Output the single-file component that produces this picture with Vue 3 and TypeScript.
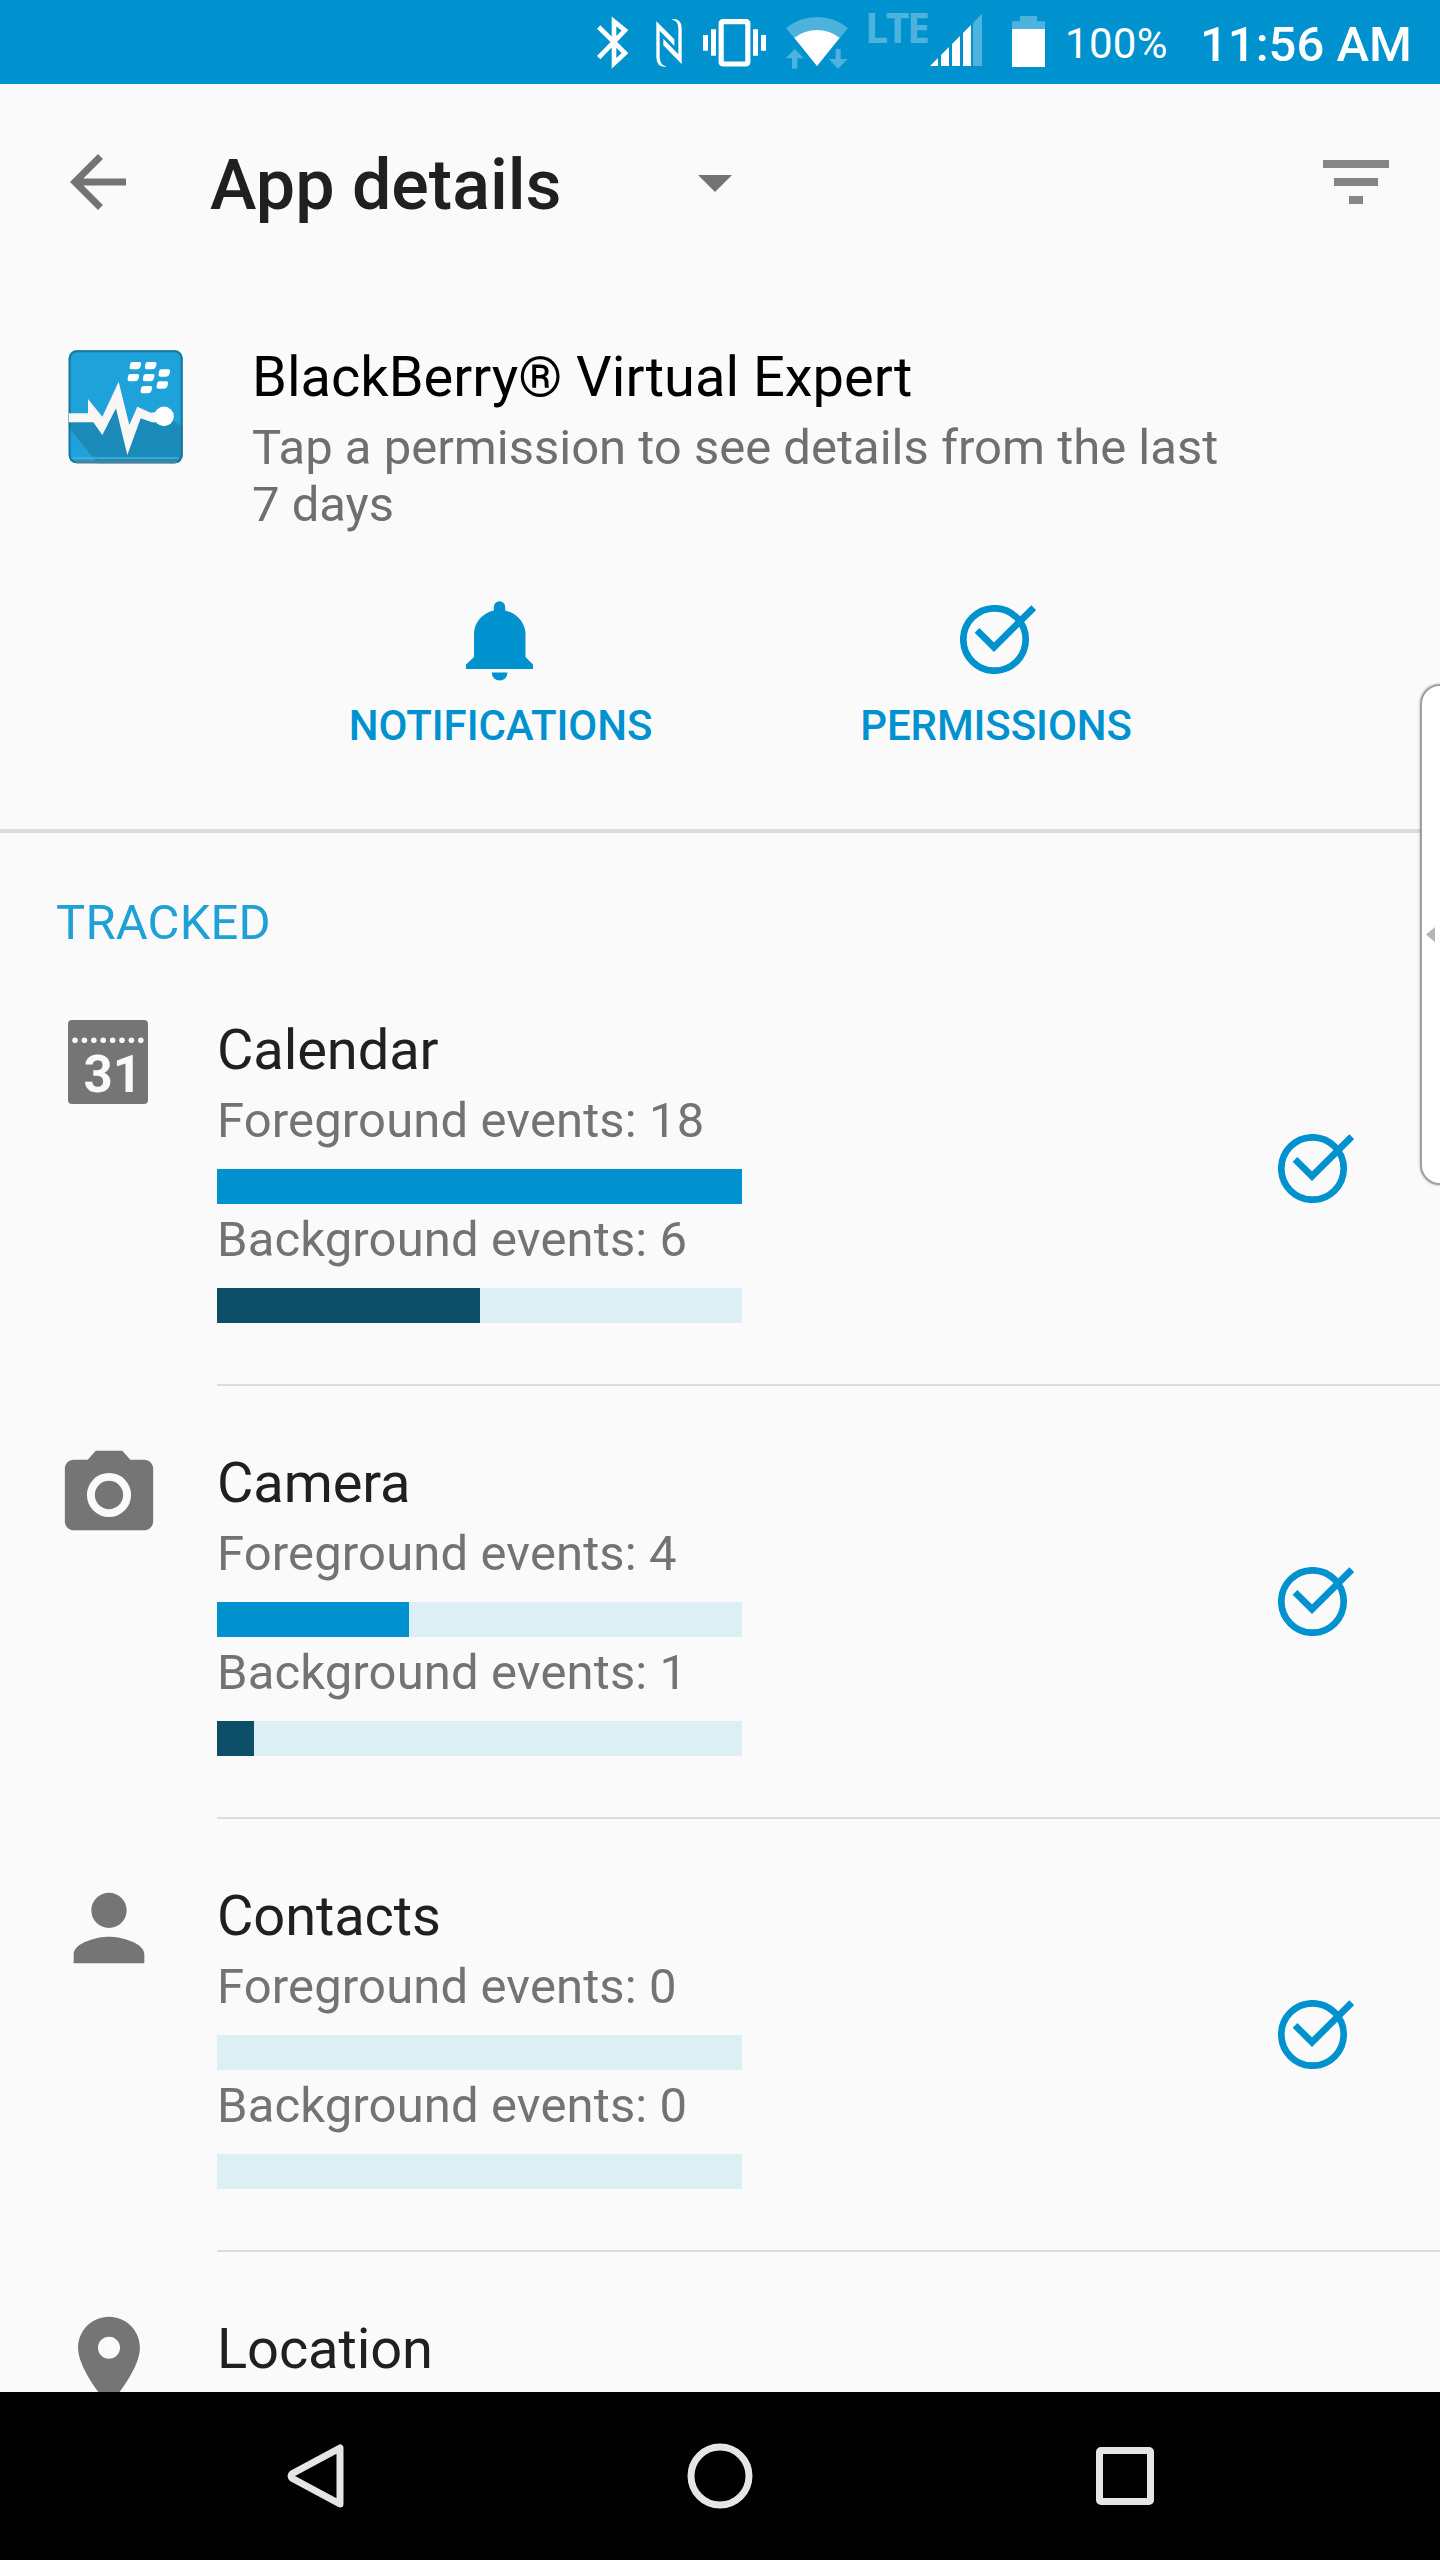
<script setup lang="ts">
interface Permission {
  name: string
  icon: 'calendar' | 'camera' | 'contacts' | 'location'
  foreground: number
  background: number
  foregroundShare: number
  backgroundShare: number
}

const permissions: Permission[] = [
  { name: 'Calendar', icon: 'calendar', foreground: 18, background: 6, foregroundShare: 100, backgroundShare: 50.1 },
  { name: 'Camera', icon: 'camera', foreground: 4, background: 1, foregroundShare: 36.6, backgroundShare: 7.05 },
  { name: 'Contacts', icon: 'contacts', foreground: 0, background: 0, foregroundShare: 0, backgroundShare: 0 },
  { name: 'Location', icon: 'location', foreground: 0, background: 0, foregroundShare: 0, backgroundShare: 0 },
]

const calendarDots = Array.from({ length: 8 }, (_, i) => 7 + i * 9.4)

const logoDots: [number, number][] = [
  [256, 107], [302, 107], [250, 143], [296, 143], [343, 129], [337, 165], [289, 179],
]
</script>

<template>
  <div class="screen">
    <header class="status">
      <svg class="bt" viewBox="52 0 93 252" width="31" height="84">
        <path d="M57 81 L136 159 L103 190 V64 L136 91 L57 173" fill="none" stroke="#fff" stroke-width="14" />
      </svg>
      <svg class="nfc" viewBox="227 0 78 252" width="26" height="84">
        <path d="M228 64 L282 118 V138 L238 92 V170 Q238 194 256 199 V201 Q228 201 228 172 Z" fill="#fff" />
        <path d="M304 192 L249 136 V116 L294 163 V86 Q294 62 276 59 V57 Q304 56 304 84 Z" fill="#fff" />
      </svg>
      <svg class="vibrate" viewBox="369 0 189 252" width="63" height="84">
        <rect x="423.500" y="65" width="80" height="127" rx="5" fill="none" stroke="#fff" stroke-width="15.500" />
        <path d="M369 105h15v47h-15zM393 88h15v79h-15zM519 88h15v79h-15zM543 105h15v47h-15z" fill="#fff" />
      </svg>
      <svg class="wifi" viewBox="615 0 189 252" width="63" height="84">
        <path d="M618 84 Q660 51 711 51 T804 84 L711 198 Z" fill="#4db3dd" />
        <path d="M636 206 V175 H617 L644.500 147 L672 175 H652 V206Z M767 147 H782 V177 H803 L774.500 206 L746 177 H767Z" fill="#4db3dd" />
        <path d="M643 113 Q674 90 711 90 T779 113 L711 198 Z" fill="#fff" />
      </svg>
      <span class="lte">LTE</span>
      <svg class="signal" viewBox="1050 0 156 252" width="52" height="84">
        <path d="M1050 198L1074 174V198ZM1083 198V165L1107 141V198ZM1116 198V132L1140 108V198ZM1149 198V99L1173 75V198Z" fill="#fff" />
        <path d="M1179 198V68L1206 41V198Z" fill="#4db3dd" />
      </svg>
      <svg class="battery" viewBox="36 0 99 252" width="33" height="84">
        <path d="M36 64H60V48H111V64H135V88H36Z" fill="#4db3dd" />
        <path d="M36 87H135V201H36Z" fill="#fff" />
      </svg>
      <span class="percent">100%</span>
      <span class="clock">11:56 AM</span>
    </header>

    <main class="content">
      <div class="toolbar">
        <svg class="back" viewBox="0 0 24 24" width="84" height="84">
          <path d="M20 11H7.830l5.590-5.590L12 4l-8 8 8 8 1.410-1.410L7.830 13H20v-2z" fill="#737373" />
        </svg>
        <h1>App details</h1>
        <svg class="caret" viewBox="0 0 34 17" width="34" height="17"><path d="M0 0H34L17 17Z" fill="#737373" /></svg>
        <svg class="filter" viewBox="0 0 66 44" width="66" height="44">
          <path d="M0 0H66V8H0ZM11 18H55V26H11ZM26 36H40V44H26Z" fill="#858585" />
        </svg>
      </div>

      <section class="app">
        <svg class="logo" viewBox="54 60 345 342" width="115" height="114">
          <defs>
            <clipPath id="tile"><rect x="56" y="61" width="342" height="339" rx="24" /></clipPath>
          </defs>
          <g clip-path="url(#tile)">
            <rect x="54" y="60" width="345" height="342" fill="#1fa2da" />
            <path d="M56 277L130 277L157 315L198 235L232 375L272 265L340 288L368 270L398 292V402H144L56 292Z" fill="#1b8bba" />
            <rect x="58" y="63" width="338" height="335" rx="22" fill="none" stroke="#1a779f" stroke-width="8" />
            <path d="M68 384H386" stroke="#45b4e0" stroke-width="5" />
            <path d="M76 396H380" stroke="#4f7f96" stroke-width="9" />
          </g>
          <path d="M57 250H114V207L157 260L206 155L238 285L262 230L302 248L320 246V277H306L272 265L232 375L198 235L157 315L130 277H57Z" fill="#f9f6f5" />
          <circle cx="342" cy="259" r="29.500" fill="#fff" />
          <path
            v-for="([x, y], i) in logoDots"
            :key="i"
            :transform="`translate(${x} ${y})`"
            d="M-10 -11H12Q19 -10 17 -3L15 4Q13 11 5 11H-13Q-19 10 -17 3L-16 -4Q-15 -10 -10 -11Z"
            fill="#fff"
          />
        </svg>
        <div class="about">
          <h2>BlackBerry® Virtual Expert</h2>
          <p>Tap a permission to see details from the last<br />7 days</p>
        </div>
      </section>

      <nav class="actions">
        <div class="action notifications">
          <svg viewBox="0 0 67 80" width="67" height="80">
            <path d="M27.800 9.500V6a5.700 5.700 0 0 1 11.400 0V9.500C51 12 59.500 22 59.500 33V56L67 63.500V68H0V63.500L8 56V33C8 22 16 12 27.800 9.500Z" fill="#0092cf" />
            <path d="M25.800 71.500H41.500A7.850 8 0 0 1 25.800 71.500Z" fill="#0092cf" />
          </svg>
          <span>NOTIFICATIONS</span>
        </div>
        <div class="action permissions">
          <svg class="check" viewBox="0 0 76 69" width="76" height="69">
            <circle cx="34.500" cy="34.500" r="31.200" />
            <path d="M17 25.300L34 42.200L73.700 2.700" />
          </svg>
          <span>PERMISSIONS</span>
        </div>
      </nav>

      <section class="tracked">
        <h3>TRACKED</h3>
        <div v-for="p in permissions" :key="p.name" class="row">
          <div class="icon">
            <svg v-if="p.icon === 'calendar'" class="cal" viewBox="0 0 80 84" width="80" height="84">
              <rect width="80" height="84" rx="4" fill="#757575" />
              <circle v-for="x in calendarDots" :key="x" :cx="x" cy="20.300" r="2.800" fill="#fafafa" />
              <text x="15.500" y="72" class="day">31</text>
            </svg>
            <svg v-else viewBox="0 0 24 24" width="106" height="106" fill="#757575">
              <path
                v-if="p.icon === 'camera'"
                fill-rule="evenodd"
                d="M9 2L7.170 4H4c-1.100 0-2 .9-2 2v12c0 1.100.9 2 2 2h16c1.100 0 2-.9 2-2V6c0-1.100-.9-2-2-2h-3.170L15 2H9zM12 7a5 5 0 1 0 0 10a5 5 0 1 0 0-10zM12 8.800a3.200 3.200 0 1 1 0 6.400a3.200 3.200 0 1 1 0-6.400z"
              />
              <path
                v-else-if="p.icon === 'contacts'"
                d="M12 12c2.210 0 4-1.790 4-4s-1.790-4-4-4-4 1.790-4 4 1.790 4 4 4zm0 2c-2.670 0-8 1.340-8 4v2h16v-2c0-2.660-5.330-4-8-4z"
              />
              <path
                v-else
                d="M12 2C8.130 2 5 5.130 5 9c0 5.250 7 13 7 13s7-7.750 7-13c0-3.870-3.130-7-7-7zm0 9.500c-1.380 0-2.500-1.120-2.500-2.500s1.120-2.500 2.500-2.500 2.500 1.120 2.500 2.500-1.120 2.500-2.500 2.500z"
              />
            </svg>
          </div>
          <div class="detail">
            <div class="stats">
              <h4>{{ p.name }}</h4>
              <template v-if="p.icon !== 'location'">
                <p class="first">Foreground events: {{ p.foreground }}</p>
                <div class="bar"><div class="fill fg" :style="{ width: p.foregroundShare + '%' }"></div></div>
                <p>Background events: {{ p.background }}</p>
                <div class="bar"><div class="fill bg" :style="{ width: p.backgroundShare + '%' }"></div></div>
              </template>
            </div>
            <svg v-if="p.icon !== 'location'" class="check" viewBox="0 0 76 69" width="76" height="69">
              <circle cx="34.500" cy="34.500" r="31.200" />
              <path d="M17 25.300L34 42.200L73.700 2.700" />
            </svg>
          </div>
        </div>
      </section>
    </main>

    <footer class="navbar">
      <svg class="nav-back" viewBox="0 0 57 66" width="57" height="66">
        <path d="M53 5V61L5.500 35.500Q2.500 33 5.500 30.500Z" />
      </svg>
      <svg class="nav-home" viewBox="0 0 66 66" width="66" height="66"><circle cx="33" cy="33" r="29" /></svg>
      <svg class="nav-recent" viewBox="0 0 60 60" width="60" height="60"><rect x="4.500" y="4.500" width="51" height="51" rx="1.500" /></svg>
    </footer>

    <aside class="edge">
      <svg viewBox="0 0 9 15" width="9" height="15"><path d="M9 0V15L0 7.500Z" fill="#b5b5b5" /></svg>
    </aside>
  </div>
</template>

<style>
body { margin: 0; background: #fafafa; }
</style>

<style scoped>
.screen {
  position: relative;
  display: flex;
  flex-direction: column;
  width: 1440px;
  height: 2560px;
  overflow: hidden;
  background: #fafafa;
  color: #202020;
  font-family: Roboto, "Liberation Sans", sans-serif;
}
svg { display: block; flex: none; }
h1, h2, h3, h4, p { margin: 0; font-weight: 400; white-space: nowrap; }

.status {
  display: flex;
  flex: none;
  height: 84px;
  box-sizing: border-box;
  padding-left: 597px;
  background: #0092cf;
  color: #fff;
  white-space: nowrap;
}
.nfc { margin-left: 28px; }
.vibrate { margin-left: 21px; }
.wifi { margin-left: 19px; }
.lte {
  width: 64px;
  margin-left: 17px;
  font: 700 41px/54px "Open Sans", sans-serif;
  letter-spacing: -2.500px;
  color: #4db3dd;
}
.signal { margin-left: 1px; }
.battery { margin-left: 30px; }
.percent { width: 135px; margin-left: 20px; font-size: 42px; line-height: 88px; letter-spacing: 0.300px; }
.clock { font-size: 49px; font-weight: 500; line-height: 89px; }

.content { flex: 1; min-height: 0; overflow: hidden; }
.toolbar { display: flex; align-items: center; height: 196px; padding: 0 51px 0 56px; }
h1 { margin-left: 70px; font-size: 70px; font-weight: 500; line-height: 84px; padding-top: 6px; }
.caret { margin: 2px 0 0 136px; }
.filter { margin-left: auto; }

.app { display: flex; height: 256px; padding: 70px 0 0 68px; box-sizing: border-box; }
.about { margin-left: 69px; }
h2 { font-size: 56px; line-height: 66px; margin-top: -6px; color: #000; }
.about p { font-size: 49px; line-height: 57px; margin-top: 9px; color: #6f6f6f; }

.actions {
  display: flex;
  height: 297px;
  box-sizing: border-box;
  padding-left: 300px;
  border-bottom: 4px solid #dcdcdc;
}
.action { display: flex; flex-direction: column; align-items: center; }
.action span { margin-top: auto; margin-bottom: 78px; font-size: 42px; font-weight: 500; line-height: 50px; letter-spacing: -0.080px; color: #0092cf; }
.notifications { width: 401px; padding-top: 65px; }
.notifications svg { margin-right: 2px; }
.permissions { width: 590px; padding-top: 69px; }
.permissions svg { margin-left: 3px; }
.check { fill: none; stroke: #0092cf; stroke-width: 6.700; }

h3 { height: 120px; box-sizing: border-box; padding: 61px 0 0 56px; font-size: 49px; line-height: 58px; letter-spacing: 0.150px; color: #1fa1d6; }
.row { display: flex; height: 433px; }
.icon { width: 106px; margin: 56px 0 0 55.500px; flex: none; }
.cal { margin: 11px 0 0 12.500px; }
.day { font-size: 51px; font-weight: 700; fill: #fafafa; }
.detail {
  display: flex;
  flex: 1;
  align-items: center;
  justify-content: space-between;
  margin-left: 55.500px;
  padding-right: 86px;
  border-bottom: 2px solid #dcdcdc;
}
.stats { align-self: flex-start; width: 525px; padding-top: 64px; }
h4 { font-size: 56px; line-height: 66px; letter-spacing: -0.100px; }
.stats p { margin-top: 7px; font-size: 49px; line-height: 58px; letter-spacing: 0.130px; color: #737373; }
.stats .first { margin-top: 9px; }
.bar { height: 35px; margin-top: 19px; background: #dceff5; }
.fill { height: 100%; }
.fg { background: #0092cf; }
.bg { background: #0d4f68; }

.navbar { display: flex; flex: none; align-items: center; height: 168px; background: #000; }
.navbar svg { fill: none; stroke: #e5e5e5; stroke-width: 7; stroke-linejoin: round; }
.nav-back { margin-left: 287px; }
.nav-home { margin-left: 343px; }
.nav-recent { margin-left: 342px; }

.edge {
  position: absolute;
  top: 684px;
  right: -30px;
  display: flex;
  align-items: center;
  width: 50px;
  height: 501px;
  box-sizing: border-box;
  padding-left: 4px;
  border: 2px solid #a0a0a0;
  border-radius: 20px;
  background: #fff;
  box-shadow: 0 0 3px rgba(0, 0, 0, 0.3);
}
</style>
